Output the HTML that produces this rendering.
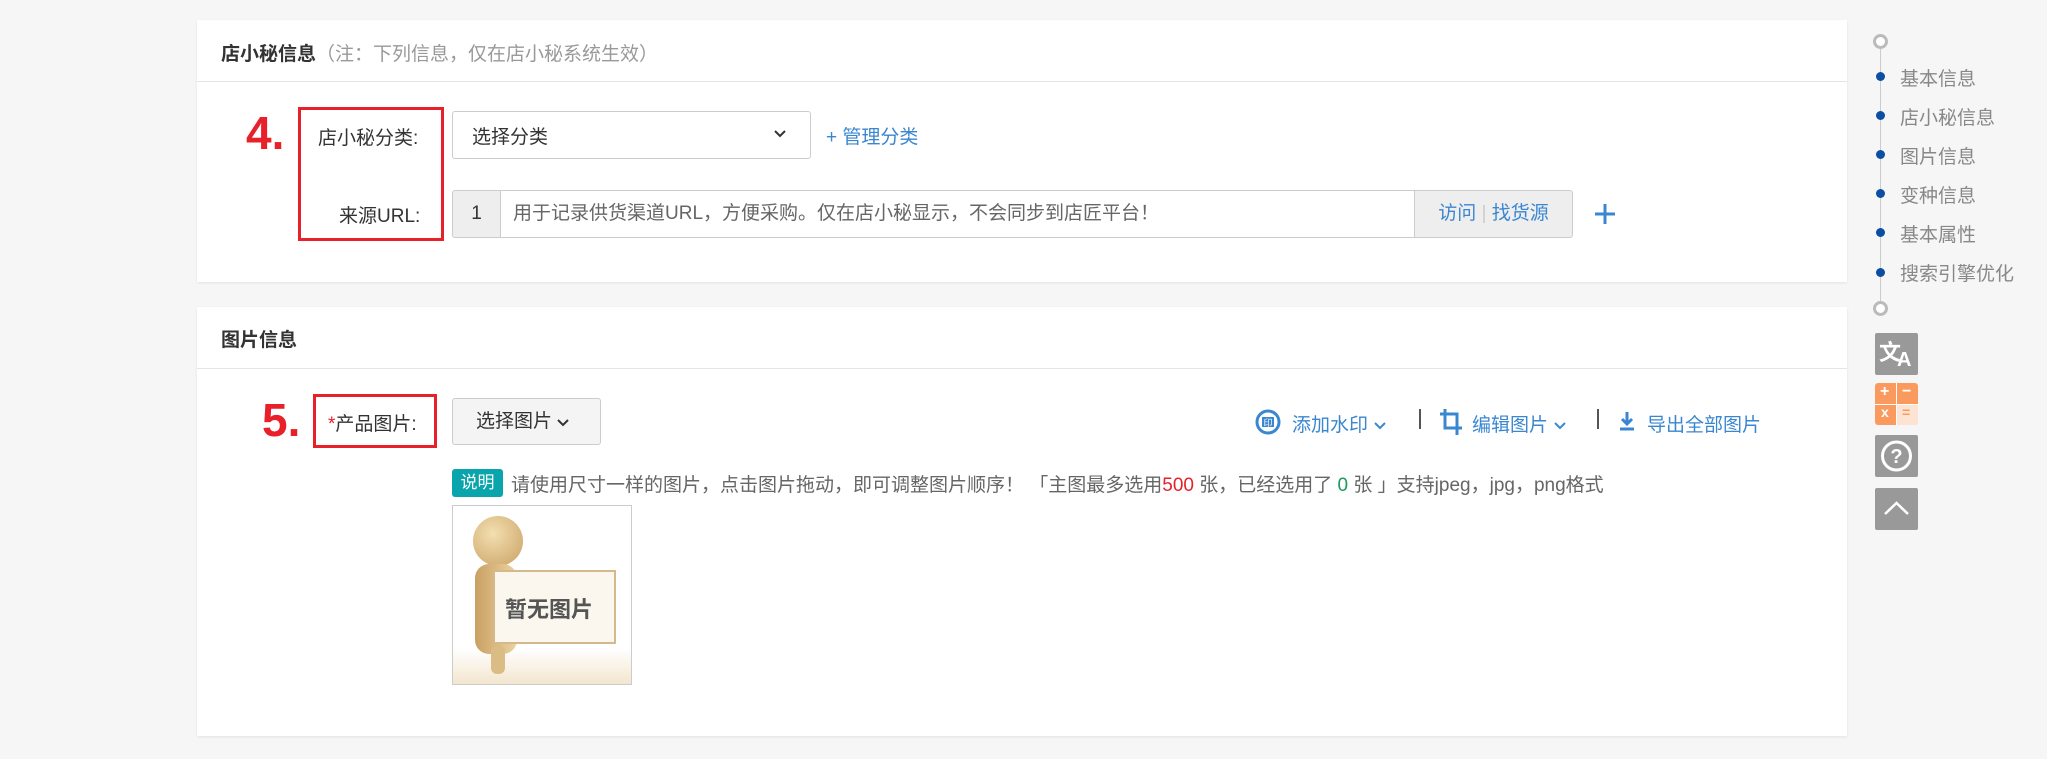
<!DOCTYPE html>
<html><head><meta charset="utf-8"><style>
*{margin:0;padding:0;box-sizing:border-box}
body{width:2047px;height:759px;background:#f6f6f6;position:relative;overflow:hidden;font-family:"Liberation Sans","Noto Sans CJK SC",sans-serif;font-size:19px;color:#555}
.a{position:absolute;white-space:nowrap}
.card{position:absolute;left:197px;width:1650px;background:#fff;box-shadow:0 1px 3px rgba(0,0,0,.08)}
.hd{position:absolute;left:0;right:0;height:1px;background:#e5e5e5}
.red{position:absolute;border:3px solid #e8202a}
.num{position:absolute;color:#e8202a;font-weight:bold;font-size:46px;font-family:"Liberation Sans",sans-serif}
.blue{color:#3a87d0}
.nav{color:#888;font-size:19px}
.dot{position:absolute;left:1876px;width:9px;height:9px;border-radius:50%;background:#0b4ea2}
.ring{position:absolute;left:1873px;width:15px;height:15px;border-radius:50%;border:3px solid #bbb;background:#fff}
.gbtn{position:absolute;left:1875px;width:43px;height:42px;background:#999;border-radius:2px}
</style></head><body>

<div class="card" style="top:20px;height:262px">
  <div class="a" style="left:24px;top:19px;font-size:19px;color:#333"><b>店小秘信息</b><span style="color:#999">（注：下列信息，仅在店小秘系统生效）</span></div>
  <div class="hd" style="top:61px"></div>
</div>
<div class="red" style="left:298px;top:107px;width:146px;height:134px"></div>
<div class="num" style="left:246px;top:106px">4.</div>
<div class="a" style="left:318px;top:123px;color:#333">店小秘分类:</div>
<div class="a" style="left:452px;top:111px;width:359px;height:48px;border:1px solid #ccc;border-radius:3px;background:#fff"></div>
<div class="a" style="left:472px;top:122px;color:#333">选择分类</div>
<svg class="a" style="left:773px;top:129px" width="14" height="10"><path d="M2 2l5 5 5-5" stroke="#333" stroke-width="2" fill="none"/></svg>
<div class="a blue" style="left:826px;top:122px">+ 管理分类</div>

<div class="a" style="left:339px;top:201px;color:#333">来源URL:</div>
<div class="a" style="left:452px;top:190px;width:49px;height:48px;border:1px solid #ccc;border-radius:3px 0 0 3px;background:#eee;text-align:center;line-height:46px;color:#333">1</div>
<div class="a" style="left:500px;top:190px;width:915px;height:48px;border:1px solid #ccc;background:#fff;padding-left:12px;line-height:46px;color:#666">用于记录供货渠道URL，方便采购。仅在店小秘显示，不会同步到店匠平台！</div>
<div class="a" style="left:1414px;top:190px;width:159px;height:48px;border:1px solid #ccc;border-radius:0 3px 3px 0;background:#eee;line-height:46px;text-align:center" ><span class="blue">访问</span> <span style="color:#ccc">|</span> <span class="blue">找货源</span></div>
<svg class="a" style="left:1594px;top:203px" width="22" height="22"><path d="M11 1v20M1 11h20" stroke="#3a87d0" stroke-width="3"/></svg>

<div class="card" style="top:307px;height:429px">
  <div class="hd" style="top:61px"></div>
  <div class="a" style="left:24px;top:18px;font-size:19px;color:#333;font-weight:bold">图片信息</div>
</div>
<div class="red" style="left:313px;top:394px;width:124px;height:54px"></div>
<div class="num" style="left:262px;top:393px">5.</div>
<div class="a" style="left:328px;top:409px;color:#333"><span style="color:#e8202a">*</span>产品图片:</div>
<div class="a" style="left:452px;top:398px;width:149px;height:47px;border:1px solid #ccc;border-radius:3px;background:#f4f4f4;line-height:45px;padding-left:23px;color:#333">选择图片 <svg width="12" height="9"><path d="M1 2l5 5 5-5" stroke="#333" stroke-width="2" fill="none"/></svg></div>

<svg class="a" style="left:1255px;top:409px" width="26" height="26"><circle cx="13" cy="13" r="11" fill="none" stroke="#3a87d0" stroke-width="3"/><rect x="7" y="8" width="12" height="10" fill="#3a87d0"/><text x="13" y="17" font-size="9" fill="#fff" text-anchor="middle" font-family="Liberation Sans">印</text></svg>
<div class="a blue" style="left:1292px;top:410px">添加水印 <svg width="14" height="10"><path d="M2 2l5 5 5-5" stroke="#3a87d0" stroke-width="2" fill="none"/></svg></div>
<div class="a" style="left:1419px;top:409px;width:2px;height:20px;background:#555"></div>
<svg class="a" style="left:1439px;top:408px" width="24" height="28"><path d="M6 1v19h17M1 6h17v21" stroke="#3a87d0" stroke-width="3" fill="none"/></svg>
<div class="a blue" style="left:1472px;top:410px">编辑图片 <svg width="14" height="10"><path d="M2 2l5 5 5-5" stroke="#3a87d0" stroke-width="2" fill="none"/></svg></div>
<div class="a" style="left:1597px;top:409px;width:2px;height:20px;background:#555"></div>
<svg class="a" style="left:1618px;top:411px" width="18" height="20"><path d="M9 1v11M4 8l5 5 5-5" stroke="#3a87d0" stroke-width="3" fill="none"/><path d="M2 18h14" stroke="#3a87d0" stroke-width="3"/></svg>
<div class="a blue" style="left:1647px;top:410px">导出全部图片</div>

<div class="a" style="left:452px;top:469px;width:51px;height:28px;background:#0aa4ad;border-radius:3px;color:#fff;font-size:17px;line-height:28px;text-align:center">说明</div>
<div class="a" style="left:511px;top:470px;color:#666">请使用尺寸一样的图片，点击图片拖动，即可调整图片顺序！ 「主图最多选用<span style="color:#e8202a">500</span> 张，已经选用了 <span style="color:#1a9a5a">0</span> 张 」支持jpeg，jpg，png格式</div>

<div class="a" style="left:452px;top:505px;width:180px;height:180px;border:1px solid #ccc;background:linear-gradient(180deg,#fff 0%,#fff 80%,#f3e6cf 100%);overflow:hidden">
  <div style="position:absolute;left:20px;top:10px;width:50px;height:50px;border-radius:50%;background:radial-gradient(circle at 40% 35%,#f3dfb0,#c9a063)"></div>
  <div style="position:absolute;left:22px;top:58px;width:42px;height:90px;border-radius:14px;background:linear-gradient(90deg,#c9a063,#ecd3a0)"></div>
  <div style="position:absolute;left:38px;top:140px;width:14px;height:28px;background:#dcbc85;border-radius:6px"></div>
  <div style="position:absolute;left:40px;top:64px;width:123px;height:74px;border:2px solid #d4b98a;background:#fbf7ee"></div>
  <div style="position:absolute;left:52px;top:86px;font-size:22px;font-weight:bold;color:#555">暂无图片</div>
</div>

<div class="a" style="left:1880px;top:48px;width:1px;height:262px;background:#ccc"></div>
<div class="ring" style="top:34px"></div>
<div class="dot" style="top:72px"></div><div class="a nav" style="left:1900px;top:64px">基本信息</div>
<div class="dot" style="top:111px"></div><div class="a nav" style="left:1900px;top:103px">店小秘信息</div>
<div class="dot" style="top:150px"></div><div class="a nav" style="left:1900px;top:142px">图片信息</div>
<div class="dot" style="top:189px"></div><div class="a nav" style="left:1900px;top:181px">变种信息</div>
<div class="dot" style="top:228px"></div><div class="a nav" style="left:1900px;top:220px">基本属性</div>
<div class="dot" style="top:268px"></div><div class="a nav" style="left:1900px;top:259px">搜索引擎优化</div>
<div class="ring" style="top:301px"></div>
<div class="gbtn" style="top:333px;color:#fff"><span class="a" style="left:4px;top:2px;font-size:22px;font-weight:bold">文</span><span class="a" style="left:22px;top:16px;font-size:20px;font-weight:bold">A</span></div>
<div class="a" style="left:1875px;top:383px;width:43px;height:42px;border-radius:3px;background:#fb9a5f;overflow:hidden">
  <div class="a" style="left:21px;top:0;width:1px;height:42px;background:#fff"></div>
  <div class="a" style="left:0;top:21px;width:43px;height:1px;background:#fff"></div>
  <div class="a" style="left:22px;top:22px;width:21px;height:20px;background:#fde4d2"></div>
  <div class="a" style="left:5px;top:0;color:#fff;font-size:16px;font-weight:bold">+</div>
  <div class="a" style="left:27px;top:0;color:#fff;font-size:16px;font-weight:bold">−</div>
  <div class="a" style="left:6px;top:21px;color:#fff;font-size:14px;font-weight:bold">x</div>
  <div class="a" style="left:27px;top:21px;color:#fb9a5f;font-size:14px;font-weight:bold">=</div>
</div>
<div class="gbtn" style="top:435px"><svg width="43" height="42"><circle cx="21.5" cy="21" r="14" fill="none" stroke="#fff" stroke-width="3"/><text x="21.5" y="28" font-size="20" font-weight="bold" fill="#fff" text-anchor="middle" font-family="Liberation Sans">?</text></svg></div>
<div class="gbtn" style="top:488px"><svg width="43" height="42"><path d="M10 26l11.5-11 11.5 11" stroke="#fff" stroke-width="2.5" fill="none"/></svg></div>

</body></html>
